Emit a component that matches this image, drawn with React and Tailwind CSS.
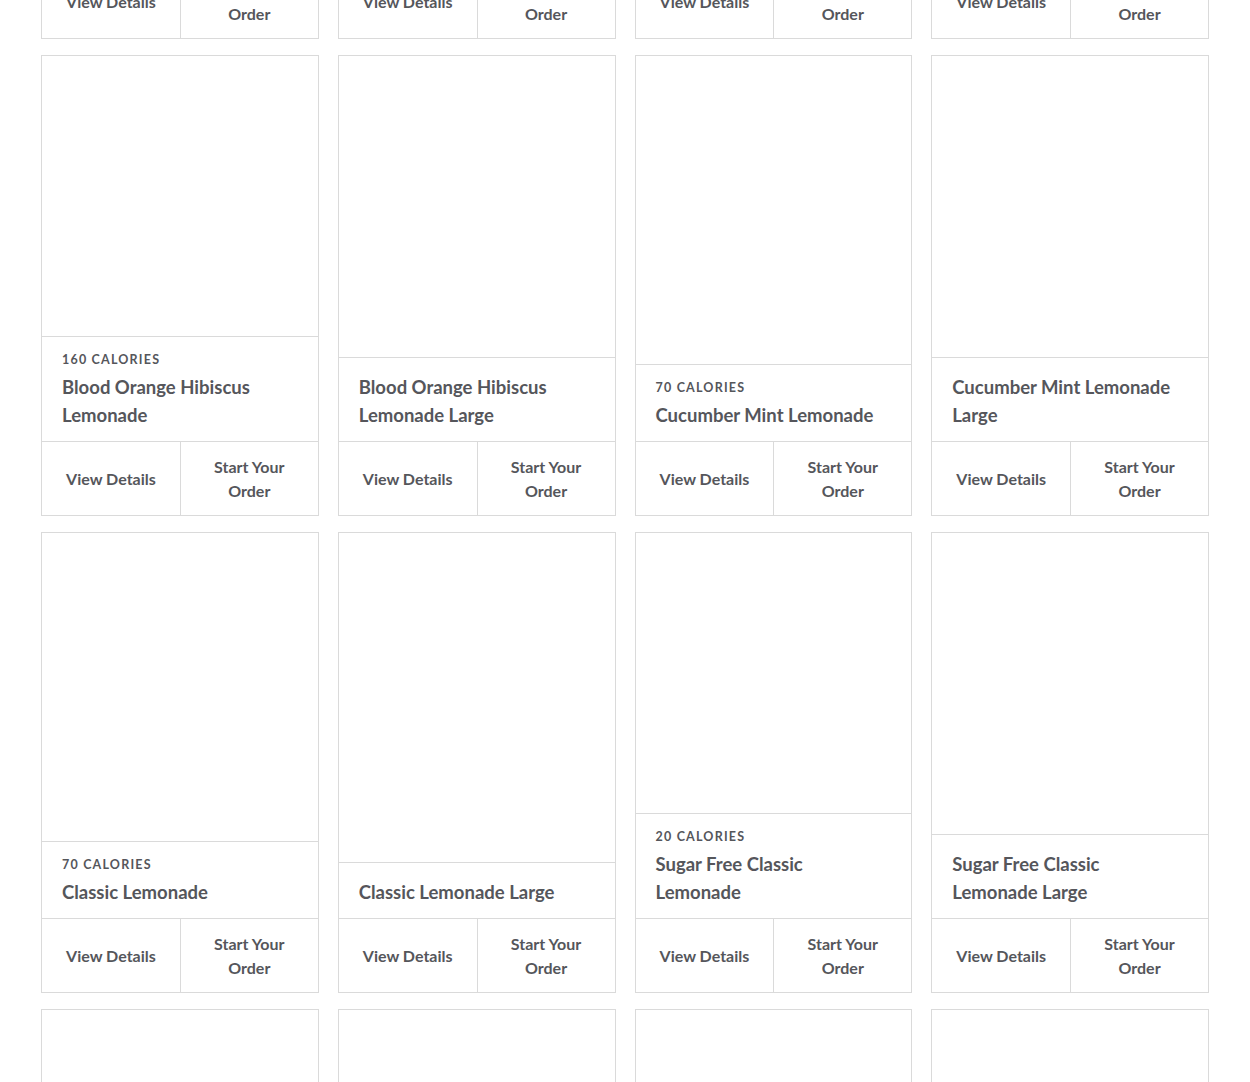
import React from "react";

const products = [
  { name: "Lemonade Top 1", calories: null },
  { name: "Lemonade Top 2", calories: null },
  { name: "Lemonade Top 3", calories: null },
  { name: "Lemonade Top 4", calories: null },
  { name: "Blood Orange Hibiscus Lemonade", calories: "160 Calories" },
  { name: "Blood Orange Hibiscus Lemonade Large", calories: null },
  { name: "Cucumber Mint Lemonade", calories: "70 Calories" },
  { name: "Cucumber Mint Lemonade Large", calories: null },
  { name: "Classic Lemonade", calories: "70 Calories" },
  { name: "Classic Lemonade Large", calories: null },
  { name: "Sugar Free Classic Lemonade", calories: "20 Calories" },
  { name: "Sugar Free Classic Lemonade Large", calories: null },
  { name: "Lemonade Bottom 1", calories: null },
  { name: "Lemonade Bottom 2", calories: null },
  { name: "Lemonade Bottom 3", calories: null },
  { name: "Lemonade Bottom 4", calories: null },
];

function ProductCard({ product }) {
  return (
    <div className="flex h-[461px] flex-col border border-[#dadada] bg-white">
      <div className="flex-1" />
      <div className="border-t border-[#dadada] px-5 pt-[15px] pb-[12px]">
        {product.calories && (
          <p className="mb-[5px] text-[12.5px] leading-[16px] font-bold uppercase tracking-[1.2px] text-[#55565b]">
            {product.calories}
          </p>
        )}
        <h3 className="text-[18.5px] leading-[28px] font-bold text-[#55565b]">{product.name}</h3>
      </div>
      <div className="grid h-[74px] grid-cols-2 border-t border-[#dadada]">
        <button className="flex items-center justify-center px-5 text-center text-[16px] leading-[24px] font-bold text-[#55565b]">
          View Details
        </button>
        <button className="flex items-center justify-center border-l border-[#dadada] px-6 text-center text-[16px] leading-[24px] font-bold text-[#55565b]">
          Start Your Order
        </button>
      </div>
    </div>
  );
}

export default function App() {
  return (
    <div className="h-[1082px] overflow-hidden bg-white font-['Lato','Open_Sans',sans-serif]">
      <div className="-mt-[422px] grid grid-cols-4 gap-x-[19px] gap-y-[16px] px-[41px]">
        {products.map((product, index) => (
          <ProductCard key={index} product={product} />
        ))}
      </div>
    </div>
  );
}
